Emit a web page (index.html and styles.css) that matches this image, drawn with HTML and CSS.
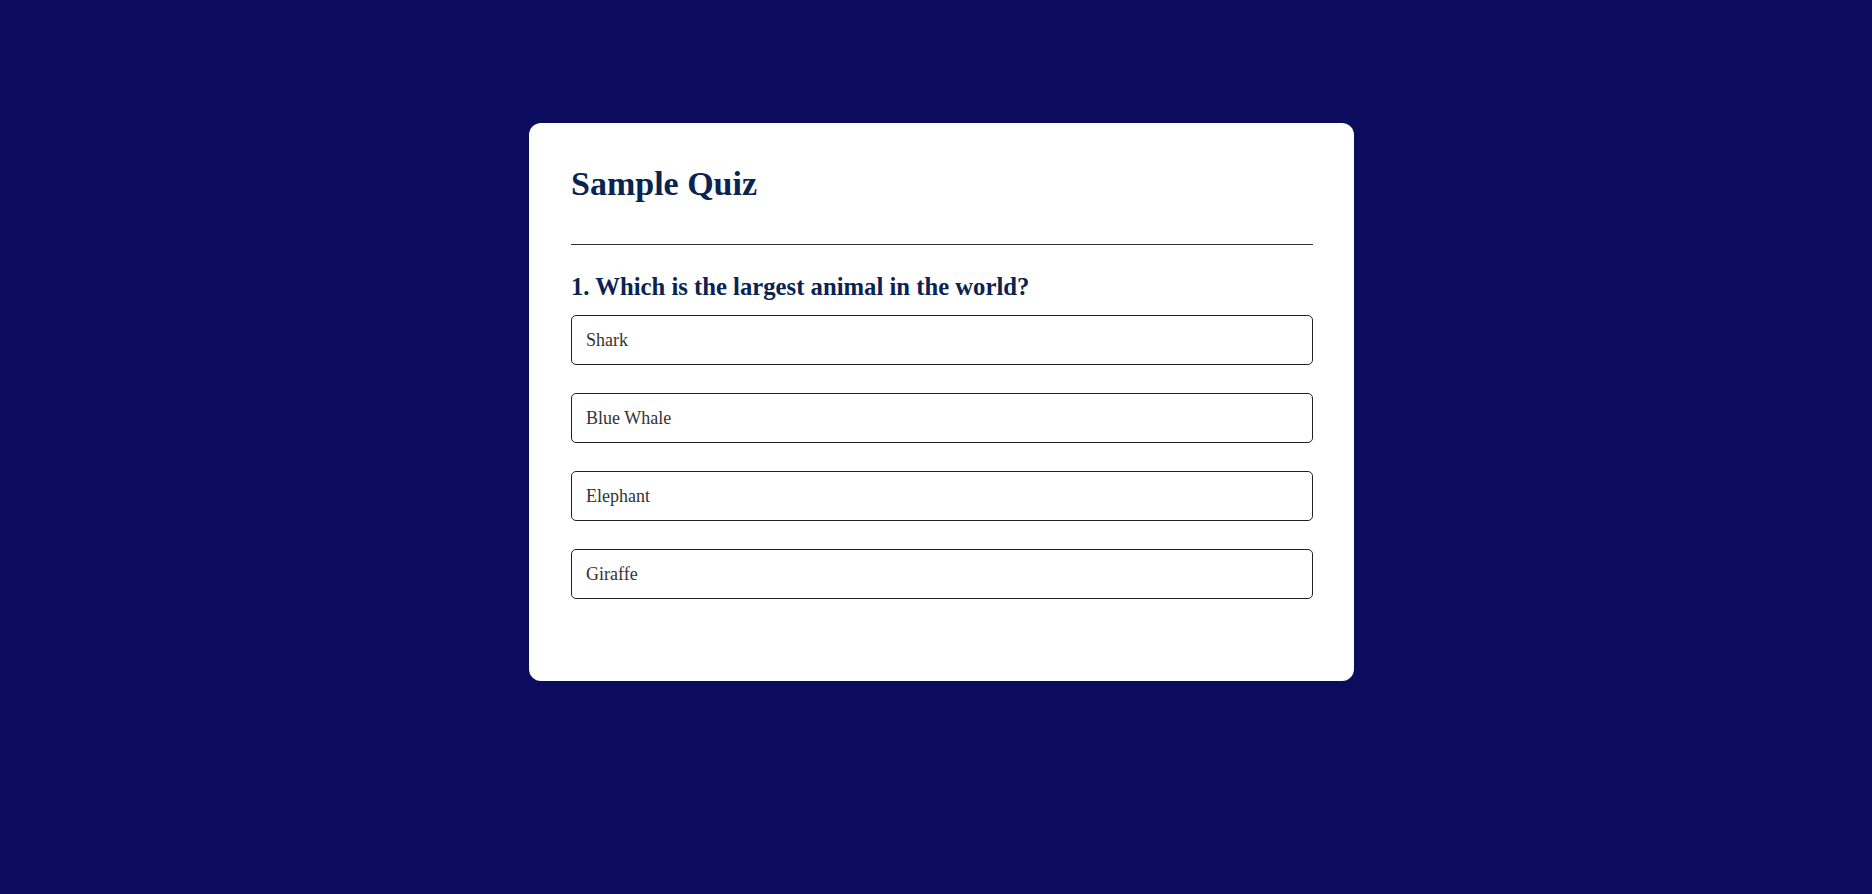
FILE: index.html
```html
<!DOCTYPE html>
<html lang="en">
<head>
<meta charset="utf-8">
<title>Sample Quiz</title>
<link rel="stylesheet" href="styles.css">
</head>
<body>
<div class="page">
  <div class="card">
    <h1 class="title">Sample Quiz</h1>
    <div class="divider"></div>
    <h2 class="question">1. Which is the largest animal in the world?</h2>
    <div class="options">
      <div class="option">Shark</div>
      <div class="option">Blue Whale</div>
      <div class="option">Elephant</div>
      <div class="option">Giraffe</div>
    </div>
  </div>
</div>
</body>
</html>
```
FILE: styles.css
```css
html, body {
  margin: 0;
  padding: 0;
}
body {
  background: #0b0c5e;
  font-family: "Liberation Serif", "Times New Roman", serif;
  min-height: 894px;
}
.page {
  display: flex;
  justify-content: center;
  padding: 123px 0 0 11px;
}
.card {
  box-sizing: border-box;
  width: 825px;
  background: #ffffff;
  border-radius: 12px;
  padding: 42px 41px 82px 42px;
}
.title {
  margin: 0;
  font-size: 34px;
  font-weight: bold;
  color: #0a2350;
}
.divider {
  margin-top: 41px;
  height: 1px;
  background: #333333;
}
.question {
  margin: 28px 0 14px;
  font-size: 24.7px;
  font-weight: bold;
  color: #0a2350;
}
.options {
  display: flex;
  flex-direction: column;
  gap: 28px;
}
.option {
  box-sizing: border-box;
  height: 50px;
  display: flex;
  align-items: center;
  padding: 0 14px;
  border: 1px solid #222222;
  border-radius: 5px;
  font-size: 18px;
  color: #333333;
}
```
